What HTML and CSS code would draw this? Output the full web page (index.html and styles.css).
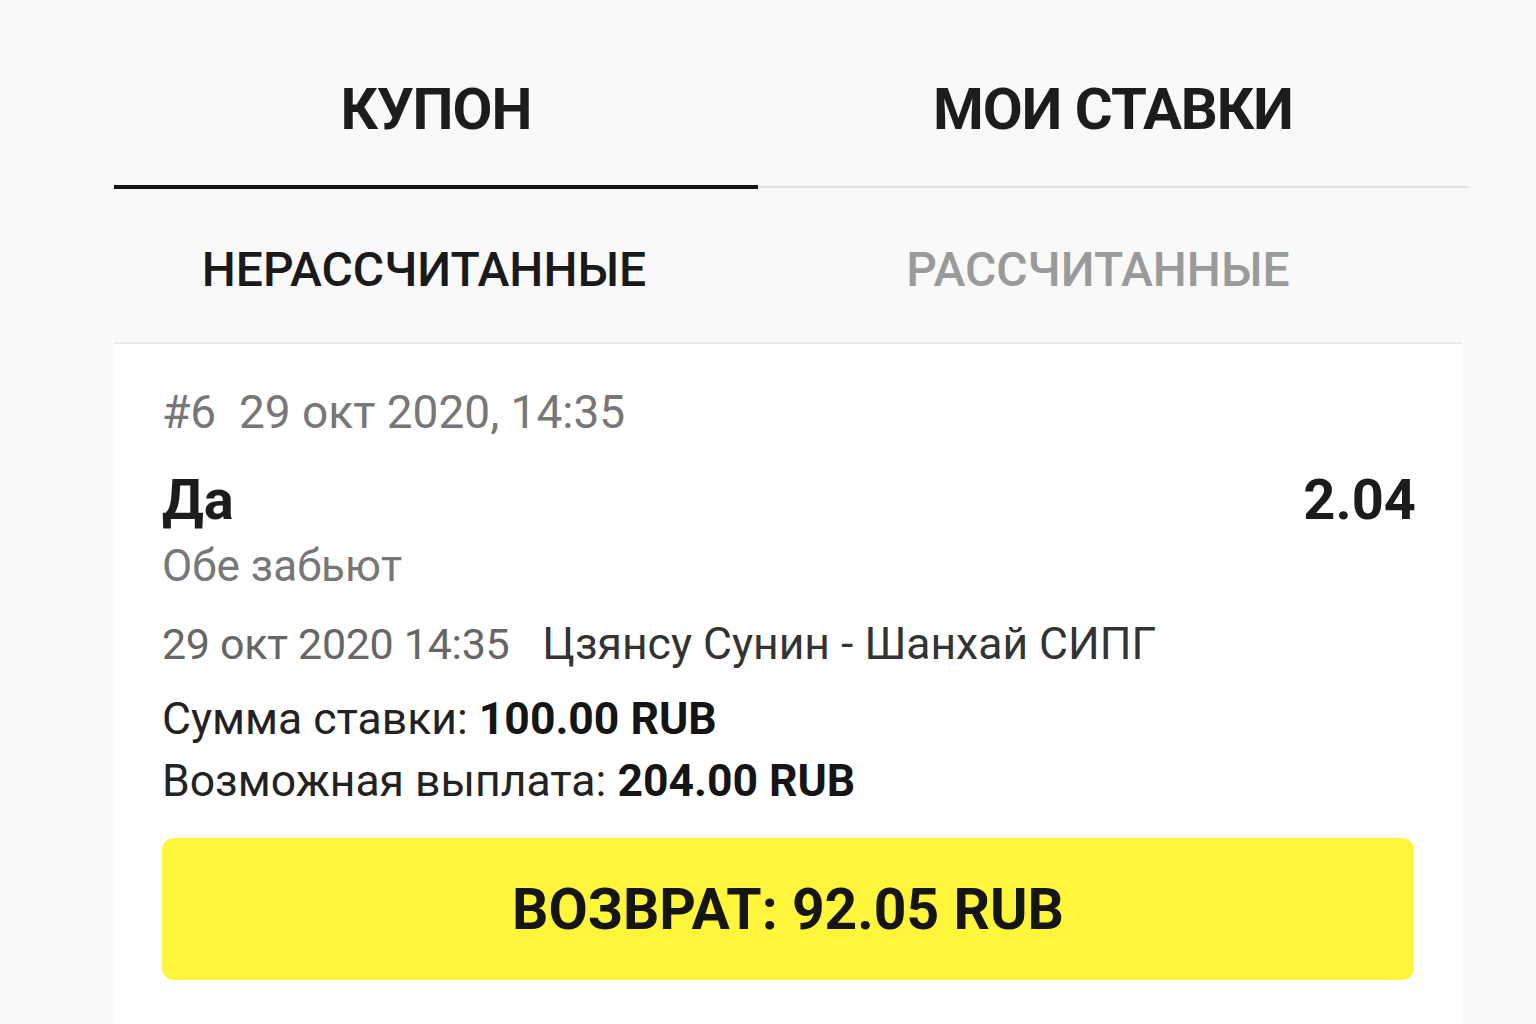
FILE: index.html
```html
<!DOCTYPE html>
<html lang="ru">
<head>
  <meta charset="UTF-8">
  <meta name="viewport" content="width=device-width, initial-scale=1.0">
  <title>Мои ставки</title>
  <link rel="stylesheet" href="styles.css">
</head>
<body>
  <div class="wrap">
    <div class="tabs">
      <div class="tab active">КУПОН</div>
      <div class="tab">МОИ СТАВКИ</div>
    </div>

    <div class="subtabs">
      <div class="subtab active">НЕРАССЧИТАННЫЕ</div>
      <div class="subtab">РАССЧИТАННЫЕ</div>
    </div>

    <div class="card">
      <div class="bet-head">#6&nbsp;&nbsp;29 окт 2020, 14:35</div>

      <div class="bet-row">
        <div class="bet-pick">Да</div>
        <div class="bet-odds">2.04</div>
      </div>
      <div class="bet-market">Обе забьют</div>

      <div class="bet-event">
        <span class="event-date">29 окт 2020 14:35</span>
        <span class="event-name">Цзянсу Сунин - Шанхай СИПГ</span>
      </div>

      <div class="bet-sum">Сумма ставки: <b>100.00 RUB</b></div>
      <div class="bet-sum">Возможная выплата: <b>204.00 RUB</b></div>

      <button class="cashout">ВОЗВРАТ: 92.05 RUB</button>
    </div>
  </div>
</body>
</html>
```

FILE: styles.css
```css
body {
  margin: 0;
  background: #f9f9f9;
  font-family: Roboto, 'Noto Sans', sans-serif;
  color: #1a1a1a;
}

.wrap {
  width: 1354px;
  margin-left: 114px;
}

/* верхние вкладки */
.tabs {
  display: grid;
  grid-template-columns: 644px 1fr;
  border-bottom: 2px solid #e0e0e0;
}

.tab {
  padding: 80px 0 47px;
  font-size: 58px;
  line-height: 58px;
  font-weight: 700;
  letter-spacing: -1px;
  text-align: center;
  color: #1c1c1c;
}

.tab.active {
  border-bottom: 4px solid #151515;
  margin-bottom: -3px;
}

/* подвкладки */
.subtabs {
  display: grid;
  grid-template-columns: 620px 1fr;
  width: 1348px;
  border-bottom: 2px solid #ececec;
}

.subtab {
  padding: 58px 0 48px;
  font-size: 48px;
  line-height: 48px;
  font-weight: 500;
  text-align: center;
  color: #9a9a9a;
}

.subtab.active {
  color: #1a1a1a;
}

/* карточка ставки */
.card {
  width: 1348px;
  box-sizing: border-box;
  background: #fff;
  padding: 45px 48px 60px;
}

.bet-head {
  font-size: 46px;
  line-height: 46px;
  color: #777;
}

.bet-row {
  display: flex;
  justify-content: space-between;
  margin-top: 37px;
}

.bet-pick,
.bet-odds {
  font-size: 56px;
  line-height: 56px;
  font-weight: 700;
  color: #1c1c1c;
}

.bet-odds {
  margin-right: -2px;
}

.bet-market {
  margin-top: 16px;
  font-size: 44px;
  line-height: 44px;
  color: #777;
}

.bet-event {
  margin-top: 34px;
  font-size: 44px;
  line-height: 44px;
}

.event-date {
  color: #666;
  font-size: 43px;
  letter-spacing: -0.3px;
  margin-right: 22px;
}

.event-name {
  color: #333;
  font-size: 44.5px;
}

.bet-sum {
  margin-top: 18px;
  font-size: 44.5px;
  line-height: 44px;
  color: #222;
}

.bet-event + .bet-sum {
  margin-top: 31px;
}

.bet-sum b {
  color: #151515;
}

.cashout {
  display: block;
  width: 100%;
  height: 142px;
  margin-top: 35px;
  border: none;
  border-radius: 12px;
  background: #fff53a;
  font-family: Roboto, 'Noto Sans', sans-serif;
  font-size: 57px;
  font-weight: 700;
  color: #151515;
  cursor: pointer;
}
```
